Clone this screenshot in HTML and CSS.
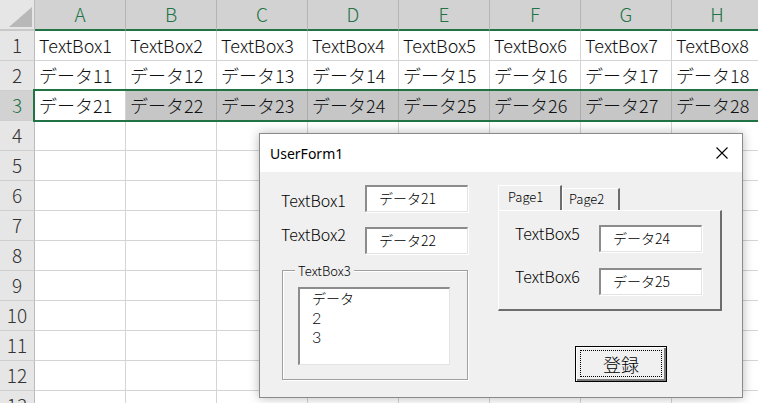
FILE: index.html
```html
<!DOCTYPE html>
<html lang="ja">
<head>
<meta charset="utf-8">
<title>UserForm1</title>
<link rel="stylesheet" href="styles.css">
</head>
<body>
<div class="sheet">
  <div class="grid">
    <div class="corner"></div>
    <div class="ch">A</div><div class="ch">B</div><div class="ch">C</div><div class="ch">D</div><div class="ch">E</div><div class="ch">F</div><div class="ch">G</div><div class="ch">H</div>

    <div class="rh">1</div>
    <div class="c">TextBox1</div><div class="c">TextBox2</div><div class="c">TextBox3</div><div class="c">TextBox4</div><div class="c">TextBox5</div><div class="c">TextBox6</div><div class="c">TextBox7</div><div class="c">TextBox8</div>

    <div class="rh">2</div>
    <div class="c">データ11</div><div class="c">データ12</div><div class="c">データ13</div><div class="c">データ14</div><div class="c">データ15</div><div class="c">データ16</div><div class="c">データ17</div><div class="c">データ18</div>

    <div class="rh rs">3</div>
    <div class="c">データ21</div><div class="c s">データ22</div><div class="c s">データ23</div><div class="c s">データ24</div><div class="c s">データ25</div><div class="c s">データ26</div><div class="c s">データ27</div><div class="c s">データ28</div>

    <div class="rh">4</div>
    <div class="c"></div><div class="c"></div><div class="c"></div><div class="c"></div><div class="c"></div><div class="c"></div><div class="c"></div><div class="c"></div>
    <div class="rh">5</div>
    <div class="c"></div><div class="c"></div><div class="c"></div><div class="c"></div><div class="c"></div><div class="c"></div><div class="c"></div><div class="c"></div>
    <div class="rh">6</div>
    <div class="c"></div><div class="c"></div><div class="c"></div><div class="c"></div><div class="c"></div><div class="c"></div><div class="c"></div><div class="c"></div>
    <div class="rh">7</div>
    <div class="c"></div><div class="c"></div><div class="c"></div><div class="c"></div><div class="c"></div><div class="c"></div><div class="c"></div><div class="c"></div>
    <div class="rh">8</div>
    <div class="c"></div><div class="c"></div><div class="c"></div><div class="c"></div><div class="c"></div><div class="c"></div><div class="c"></div><div class="c"></div>
    <div class="rh">9</div>
    <div class="c"></div><div class="c"></div><div class="c"></div><div class="c"></div><div class="c"></div><div class="c"></div><div class="c"></div><div class="c"></div>
    <div class="rh">10</div>
    <div class="c"></div><div class="c"></div><div class="c"></div><div class="c"></div><div class="c"></div><div class="c"></div><div class="c"></div><div class="c"></div>
    <div class="rh">11</div>
    <div class="c"></div><div class="c"></div><div class="c"></div><div class="c"></div><div class="c"></div><div class="c"></div><div class="c"></div><div class="c"></div>
    <div class="rh">12</div>
    <div class="c"></div><div class="c"></div><div class="c"></div><div class="c"></div><div class="c"></div><div class="c"></div><div class="c"></div><div class="c"></div>
    <div class="rh">13</div>
    <div class="c"></div><div class="c"></div><div class="c"></div><div class="c"></div><div class="c"></div><div class="c"></div><div class="c"></div><div class="c"></div>
  </div>

  <div class="selection"></div>

  <div class="form">
    <div class="titlebar">
      <span class="title">UserForm1</span>
      <svg class="close" width="12" height="12" viewBox="0 0 12 12"><path d="M0.5 0.5 L11.5 11.5 M11.5 0.5 L0.5 11.5" stroke="#000" stroke-width="1.1" fill="none"/></svg>
    </div>
    <div class="fbody">
      <div class="lcol">
        <div class="field">
          <span class="lbl l1">TextBox1</span>
          <div class="tb">データ21</div>
        </div>
        <div class="field f2">
          <span class="lbl l2">TextBox2</span>
          <div class="tb">データ22</div>
        </div>
        <div class="frame">
          <span class="legend">TextBox3</span>
          <div class="memo"><div class="ln">データ</div><div class="ln num">2</div><div class="ln num">3</div></div>
        </div>
      </div>
      <div class="rcol">
        <div class="tabs">
          <div class="tab active">Page1</div>
          <div class="tab">Page2</div>
        </div>
        <div class="panel">
          <div class="field">
            <span class="lbl l5">TextBox5</span>
            <div class="tb">データ24</div>
          </div>
          <div class="field f6">
            <span class="lbl l5">TextBox6</span>
            <div class="tb">データ25</div>
          </div>
        </div>
        <div class="btn"><span class="focus">登録</span></div>
      </div>
    </div>
  </div>
</div>
</body>
</html>
```

FILE: styles.css
```css
* { box-sizing: border-box; }
html, body { margin: 0; padding: 0; }
body {
  width: 758px;
  height: 403px;
  overflow: hidden;
  background: #fff;
  font-family: "Noto Sans CJK JP", "Noto Sans", sans-serif;
  color: #111;
}
.sheet {
  position: relative;
  width: 758px;
  height: 403px;
  overflow: hidden;
}
.grid {
  display: grid;
  grid-template-columns: 35px repeat(8, 91px);
  grid-template-rows: 31px repeat(13, 30px);
  width: 763px;
  font-weight: 300;
}
.corner {
  position: relative;
  background: #e6e6e6;
  border-right: 1px solid #bcbcbc;
  border-bottom: 2px solid #c8c8c8;
}
.corner::after {
  content: "";
  position: absolute;
  left: 9px;
  top: 7px;
  width: 23px;
  height: 20px;
  background: #b8b8b8;
  clip-path: polygon(100% 0, 100% 100%, 0 100%);
}
.ch {
  background: #d2d2d2;
  color: #217346;
  border-right: 1px solid #b4b4b4;
  border-bottom: 2px solid #217346;
  font-size: 19px;
  display: flex;
  align-items: center;
  justify-content: center;
  padding-bottom: 2px;
}
.rh {
  background: #e6e6e6;
  color: #333;
  border-right: 1px solid #bcbcbc;
  border-bottom: 1px solid #cfcfcf;
  font-size: 19px;
  display: flex;
  align-items: center;
  justify-content: center;
  padding-bottom: 2px;
}
.rh.rs {
  background: #d2d2d2;
  color: #217346;
}
.c {
  border-right: 1px solid #d4d4d4;
  border-bottom: 1px solid #d4d4d4;
  font-size: 18px;
  padding-left: 4px;
  padding-bottom: 2px;
  display: flex;
  align-items: center;
  white-space: nowrap;
  overflow: hidden;
  color: #111;
}
.c.s {
  background: #c6c6c6;
  border-right-color: #ababab;
}
.selection {
  position: absolute;
  left: 33px;
  top: 89px;
  width: 740px;
  height: 33px;
  border: 2px solid #217346;
}

/* UserForm */
.form {
  position: absolute;
  left: 259px;
  top: 133px;
  width: 484px;
  height: 265px;
  background: #f0f0f0;
  border: 1px solid #8a8a8a;
  box-shadow: 0 0 10px rgba(0, 0, 0, 0.28);
  display: flex;
  flex-direction: column;
}
.titlebar {
  height: 38px;
  background: #fff;
  display: flex;
  align-items: center;
  justify-content: space-between;
  padding: 0 14px 0 10px;
  flex: none;
}
.title {
  font-family: "Noto Sans", "Open Sans", sans-serif;
  font-size: 14px;
  color: #000;
}
.close { display: block; }
.fbody {
  display: flex;
  padding: 13px 0 0 21px;
  font-family: "Noto Sans CJK JP", sans-serif;
  font-weight: 300;
  color: #000;
}
.lcol {
  width: 217px;
  flex: none;
}
.field {
  display: flex;
  align-items: flex-start;
  height: 27px;
}
.f2 { margin-top: 15px; }
.lbl {
  width: 84px;
  flex: none;
  font-size: 16px;
  line-height: 24px;
  white-space: nowrap;
}
.l1 { margin-top: 3px; }
.l2 { margin-top: -5px; }
.l5 { margin-top: -4px; }
.tb {
  width: 103px;
  height: 27px;
  background: #fff;
  border-top: 2px solid #8c8c8c;
  border-left: 2px solid #8c8c8c;
  border-right: 1px solid #e3e3e3;
  border-bottom: 1px solid #e3e3e3;
  box-shadow: 1px 1px 0 #fff;
  font-size: 14px;
  line-height: 23px;
  padding-left: 12px;
  white-space: nowrap;
}
.frame {
  position: relative;
  margin: 16px 0 0 1px;
  width: 186px;
  height: 110px;
  border: 1px solid #a0a0a0;
  box-shadow: inset 1px 1px 0 #fff, 1px 1px 0 #fff;
  padding: 16px 0 0 15px;
}
.legend {
  position: absolute;
  left: 12px;
  top: -10px;
  padding: 0 3px;
  background: #f0f0f0;
  font-size: 13px;
  line-height: 19px;
}
.memo {
  width: 152px;
  height: 78px;
  background: #fff;
  border-top: 2px solid #8c8c8c;
  border-left: 2px solid #8c8c8c;
  border-right: 1px solid #e3e3e3;
  border-bottom: 1px solid #e3e3e3;
  font-size: 13px;
  line-height: 19px;
  padding: 0 0 0 12px;
}
.ln {
  height: 19px;
  white-space: nowrap;
  font-size: 14px;
}
.ln.num {
  font-family: "Lato", "Liberation Sans", sans-serif;
  font-weight: 300;
  font-size: 16px;
}
.rcol {
  display: flex;
  flex-direction: column;
  align-items: flex-start;
}
.tabs {
  display: flex;
  align-items: flex-end;
  height: 25px;
}
.tab {
  font-size: 13px;
  line-height: 18px;
  border-top: 1px solid #fff;
  border-left: 1px solid #fff;
  border-right: 2px solid #6d6d6d;
  padding: 2px 0 0 9px;
}
.tab.active {
  width: 64px;
  height: 25px;
  padding-top: 2px;
}
.tab:not(.active) {
  width: 58px;
  height: 22px;
  padding-left: 6px;
  padding-top: 1px;
}
.panel {
  width: 224px;
  height: 101px;
  border-left: 1px solid #fff;
  border-top: 1px solid #fff;
  border-right: 2px solid #6d6d6d;
  border-bottom: 2px solid #6d6d6d;
  padding: 14px 0 0 16px;
}
.f6 { margin-top: 16px; }
.btn {
  margin: 35px 0 0 77px;
  width: 92px;
  height: 36px;
  border: 1px solid #000;
  background: #f0f0f0;
  box-shadow: inset 1px 1px 0 #fff, inset -2px -2px 0 #7a7a7a;
  padding: 3px 4px 4px 4px;
  display: flex;
}
.focus {
  flex: 1;
  border: 1px dotted #000;
  display: flex;
  align-items: center;
  justify-content: center;
  font-size: 18px;
  line-height: 24px;
  color: #000;
}
```
